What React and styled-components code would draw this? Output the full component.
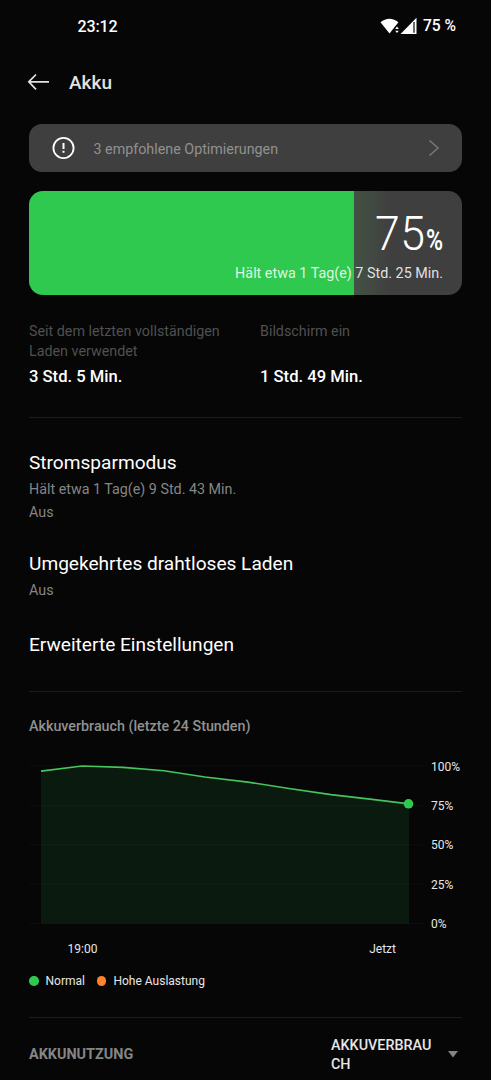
import React from 'react';
import styled, { createGlobalStyle } from 'styled-components';

const GlobalStyle = createGlobalStyle`
  * {
    box-sizing: border-box;
  }
  body {
    margin: 0;
    background-color: #060606;
    overflow: hidden;
  }
`;

const Screen = styled.div`
  width: 491px;
  height: 1080px;
  overflow: hidden;
  padding: 0 29px;
  background-color: #060606;
  color: #fff;
  font-family: Roboto, "Liberation Sans", sans-serif;
  font-size: 14px;
`;

const StatusBar = styled.div`
  display: flex;
  justify-content: space-between;
  align-items: center;
  height: 52px;
  padding: 0 6px 0 48.5px;
`;

const Clock = styled.span`
  font-size: 16px;
  font-weight: 500;
  letter-spacing: -0.15px;
`;

const StatusIcons = styled.div`
  display: flex;
  align-items: center;
  font-size: 15.6px;
  font-weight: 500;
`;

const StatusGlyphs = styled.svg`
  margin-right: 5px;
`;

const Header = styled.header`
  display: flex;
  align-items: center;
  height: 60px;
  margin-left: -2px;
`;

const PageTitle = styled.h1`
  margin: 0 0 0 20px;
  font-size: 19px;
  font-weight: 500;
  color: #e2e2e2;
`;

const Banner = styled.div`
  display: flex;
  align-items: center;
  height: 48px;
  margin-top: 12px;
  padding: 0 22px 0 23px;
  border-radius: 13px;
  background-color: #3f3f3f;
`;

const BannerText = styled.span`
  flex: 1;
  margin-left: 17.5px;
  padding-top: 2px;
  color: #919191;
  font-size: 14.3px;
`;

const BatteryCard = styled.div`
  display: flex;
  flex-direction: column;
  align-items: flex-end;
  height: 104px;
  margin-top: 19px;
  padding: 14px 19px 0 0;
  border-radius: 14px;
  background: linear-gradient(
    to right,
    #30c950 0,
    #30c950 325px,
    #435244 325px,
    #3f3f3f 362px
  );
`;

const Percentage = styled.div`
  display: flex;
  align-items: baseline;
  height: 59px;
  line-height: 57px;
  font-weight: 300;
`;

const Digits = styled.span`
  width: 51.5px;
  font-size: 49px;
  letter-spacing: 0.5px;
  transform: scaleX(0.91);
  transform-origin: left;
`;

const PercentSign = styled.span`
  width: 17px;
  font-size: 29px;
  font-weight: 600;
  transform: scaleX(0.8);
  transform-origin: left;
`;

const Estimate = styled.div`
  line-height: 20px;
  font-size: 14.35px;
  color: rgba(255, 255, 255, 0.85);
`;

const Stats = styled.div`
  display: grid;
  grid-template-columns: 231px 1fr;
  height: 122px;
  padding-top: 27px;
`;

const StatLabel = styled.div`
  max-width: 200px;
  line-height: 19.5px;
  font-size: 14.3px;
  color: #505050;
`;

const StatValue = styled.div`
  margin-top: ${props => (props.$gap || 0) + 5}px;
  line-height: 22px;
  font-size: 16.6px;
  font-weight: 500;
`;

const Divider = styled.hr`
  height: 1px;
  margin: 0;
  border: 0;
  background-color: #1c1c1c;
`;

const Settings = styled.div`
  display: flex;
  flex-direction: column;
  height: 273px;
  padding-top: 31px;
`;

const Setting = styled.div`
  margin-bottom: 26px;
  &:last-child {
    margin-top: 3px;
  }
`;

const SettingTitle = styled.div`
  height: 29px;
  line-height: 28px;
  font-size: 19.1px;
`;

const SettingNote = styled.div`
  line-height: 23px;
  font-size: 14.3px;
  color: #858585;
`;

const ChartTitle = styled.h2`
  height: 68px;
  margin: 0;
  padding-top: 23px;
  line-height: 22px;
  font-size: 14.3px;
  font-weight: 500;
  color: #919191;
`;

const ChartRow = styled.div`
  display: flex;
  height: 170px;
`;

const ChartSvg = styled.svg`
  display: block;
  flex: none;
`;

const YAxis = styled.div`
  display: flex;
  flex-direction: column;
  margin-top: -12.5px;
  margin-left: 8px;
  line-height: 39.4px;
  font-size: 12px;
  color: #e6e6e6;
`;

const XAxis = styled.div`
  display: flex;
  justify-content: space-between;
  height: 42px;
  padding: 10px 66px 0 38.5px;
  line-height: 18px;
  font-size: 12px;
  color: #e6e6e6;
`;

const Legend = styled.div`
  display: flex;
  align-items: center;
  gap: 12px;
  height: 18px;
  margin-bottom: 27px;
  font-size: 12px;
  color: #e6e6e6;
`;

const LegendItem = styled.div`
  display: flex;
  align-items: center;
  gap: 7px;
  &::before {
    content: "";
    width: 9.5px;
    height: 9.5px;
    border-radius: 50%;
    background-color: ${props => props.$color};
  }
`;

const UsageRow = styled.div`
  display: flex;
  align-items: center;
  height: 73px;
`;

const UsageTitle = styled.h2`
  flex: 1;
  margin: 0;
  font-size: 14.4px;
  font-weight: 700;
  color: #858585;
`;

const UsageSelect = styled.div`
  width: 102px;
  padding-top: 1px;
  line-height: 19.5px;
  font-size: 14.35px;
  font-weight: 500;
  color: #e6e6e6;
  word-break: break-all;
`;

const Caret = styled.svg`
  margin: 0 4px 0 15px;
`;

const levels = [
  [12, 96.8], [53, 100], [94, 99.1], [135, 97], [176, 93], [219, 89.8],
  [260, 85.7], [302, 81.8], [341, 79], [380, 76],
];
const levelY = level => 6 + (100 - level) * 1.575;
const line = levels.map(([x, level]) => `${x},${levelY(level)}`).join(' ');

const App = () => (
  <Screen>
    <GlobalStyle />
    <StatusBar>
      <Clock>23:12</Clock>
      <StatusIcons>
        <StatusGlyphs width="38" height="18" viewBox="0 0 38 18">
          <path d="M.5 5.200C6 .5 13 .5 18.400 5.200L9.500 16.500Z" fill="#fff" />
          <path d="M14.200 11.300l2.600-3.200h3v9h-5.600z" fill="#060606" />
          <path d="M15.200 12l1.800-2.500 1.800 2.500zM15.200 13.700h3.600L17 16z" fill="#fff" />
          <path d="M36.500 .8V17H20.500z" fill="#fff" />
          <path d="M34 5v10.700" stroke="#060606" strokeWidth="1.2" />
        </StatusGlyphs>
        75 %
      </StatusIcons>
    </StatusBar>
    <Header>
      <svg width="22" height="20" viewBox="0 0 22 20" fill="none" stroke="#e2e2e2" strokeWidth="1.700">
        <path d="M22 9.800H1.800M9 2.500L1.800 9.800 9 17.300" />
      </svg>
      <PageTitle>Akku</PageTitle>
    </Header>
    <Banner>
      <svg width="24" height="24" viewBox="0 0 24 24">
        <circle cx="11.500" cy="12" r="10.100" fill="none" stroke="#fff" strokeWidth="1.800" />
        <path d="M11.500 7v6M11.500 14.700v2" stroke="#fff" strokeWidth="2" />
      </svg>
      <BannerText>3 empfohlene Optimierungen</BannerText>
      <svg width="12" height="18" viewBox="0 0 12 18" fill="none" stroke="#777" strokeWidth="1.600">
        <path d="M1.500 1.500L10 9l-8.500 7.500" />
      </svg>
    </Banner>
    <BatteryCard>
      <Percentage>
        <Digits>75</Digits>
        <PercentSign>%</PercentSign>
      </Percentage>
      <Estimate>Hält etwa 1 Tag(e) 7 Std. 25 Min.</Estimate>
    </BatteryCard>
    <Stats>
      <div>
        <StatLabel>Seit dem letzten vollständigen Laden verwendet</StatLabel>
        <StatValue>3 Std. 5 Min.</StatValue>
      </div>
      <div>
        <StatLabel>Bildschirm ein</StatLabel>
        <StatValue $gap={19.5}>1 Std. 49 Min.</StatValue>
      </div>
    </Stats>
    <Divider />
    <Settings>
      <Setting>
        <SettingTitle>Stromsparmodus</SettingTitle>
        <SettingNote>Hält etwa 1 Tag(e) 9 Std. 43 Min.</SettingNote>
        <SettingNote>Aus</SettingNote>
      </Setting>
      <Setting>
        <SettingTitle>Umgekehrtes drahtloses Laden</SettingTitle>
        <SettingNote>Aus</SettingNote>
      </Setting>
      <Setting>
        <SettingTitle>Erweiterte Einstellungen</SettingTitle>
      </Setting>
    </Settings>
    <Divider />
    <ChartTitle>Akkuverbrauch (letzte 24 Stunden)</ChartTitle>
    <ChartRow>
      <ChartSvg width="394" height="170" viewBox="0 0 394 170">
        <polygon points={`12,163.500 ${line} 380,163.500`} fill="#0a1a0f" />
        {[100, 75, 50, 25, 0].map(level => (
          <path key={level} d={`M0 ${levelY(level)}H394`} stroke="#fff" strokeOpacity="0.03" />
        ))}
        <polyline points={line} fill="none" stroke="#46c45e" strokeWidth="1.700" />
        <circle cx="379.500" cy={levelY(76)} r="4.800" fill="#30c950" />
      </ChartSvg>
      <YAxis>
        <span>100%</span>
        <span>75%</span>
        <span>50%</span>
        <span>25%</span>
        <span>0%</span>
      </YAxis>
    </ChartRow>
    <XAxis>
      <span>19:00</span>
      <span>Jetzt</span>
    </XAxis>
    <Legend>
      <LegendItem $color="#30c950">Normal</LegendItem>
      <LegendItem $color="#ff832b">Hohe Auslastung</LegendItem>
    </Legend>
    <Divider />
    <UsageRow>
      <UsageTitle>AKKUNUTZUNG</UsageTitle>
      <UsageSelect>AKKUVERBRAUCH</UsageSelect>
      <Caret width="10" height="7" viewBox="0 0 10 7">
        <path d="M0 0h10L5 6.500z" fill="#858585" />
      </Caret>
    </UsageRow>
  </Screen>
);

export default App;
